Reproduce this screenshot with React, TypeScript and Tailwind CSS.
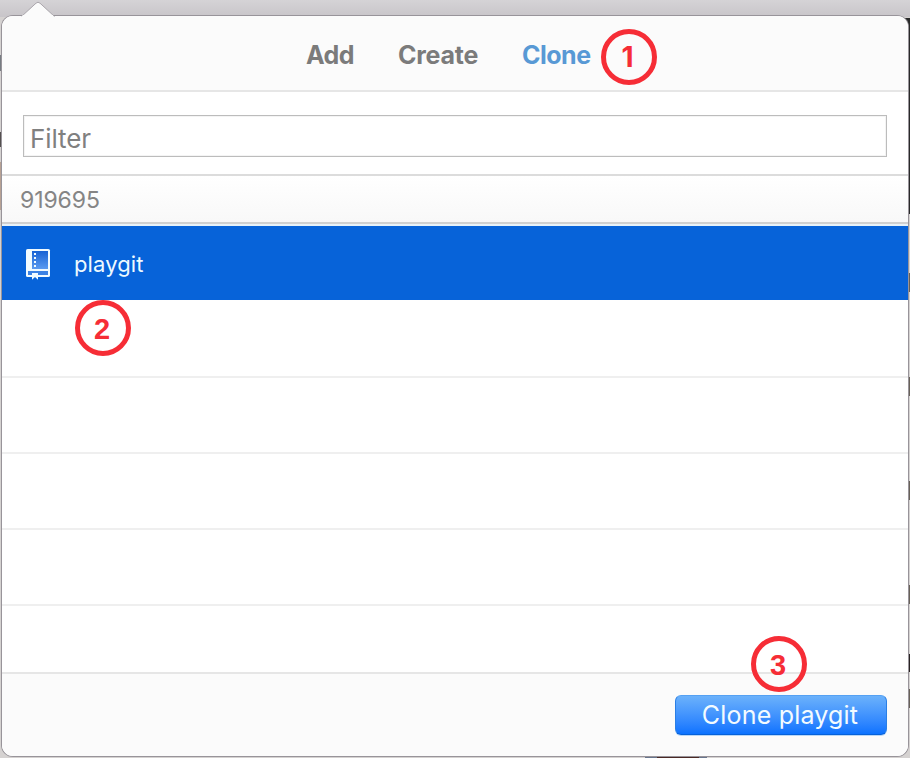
import type { ReactNode } from 'react';

function Marker({ children, className }: { children: ReactNode; className: string }) {
  return (
    <div
      className={`absolute z-10 flex h-14 w-14 items-center justify-center rounded-full border-[5px] border-[#f62d36] pr-0.5 font-bold leading-none text-[#f62d36] ${className}`}
    >
      {children}
    </div>
  );
}

function RepoIcon() {
  return (
    <svg width="26" height="32" viewBox="0 0 26 32" className="relative top-px shrink-0">
      <defs>
        <linearGradient id="page" x1="0" y1="0" x2="0" y2="1">
          <stop offset="0" stopColor="#1763d4" />
          <stop offset="1" stopColor="#5b9bf0" />
        </linearGradient>
      </defs>
      <rect x="0" y="0" width="24" height="28" rx="1.6" fill="#f1fbff" />
      <rect x="6" y="2" width="16" height="18" fill="url(#page)" />
      <path d="M2 22H22V26H12V24H6V26H2Z" fill="#3b82e4" />
      <path d="M8 4h2v2H8zM8 8h2v2H8zM8 12h2v2H8zM8 16h2v2H8z" fill="#f1fbff" />
      <path d="M6 24H12V30.7L9 28L6 30.7Z" fill="#f1fbff" />
    </svg>
  );
}

function Tab({ label, className }: { label: string; className: string }) {
  return <button className={`whitespace-nowrap text-left ${className}`}>{label}</button>;
}

export default function App() {
  return (
    <div className="relative h-[758px] w-[910px] overflow-hidden bg-[#d5d2d1] px-0.5 pt-4 font-['Inter',sans-serif]">
      {/* window behind the popover */}
      <div className="absolute inset-x-0 top-0 h-[17px] bg-gradient-to-b from-[#d5d3d6] to-[#c8c5c9]" />
      <div className="absolute left-0 top-[55px] h-4 w-0.5 bg-[#777c82]" />
      <div className="absolute left-0 top-[132px] h-[15px] w-0.5 bg-[#54504f]" />
      <div className="absolute left-0 top-[162px] h-12 w-0.5 bg-[#b7a193]" />
      <div className="absolute right-0 top-[18px] h-[196px] w-5 bg-[#292929]" />
      <div className="absolute right-0 top-[273px] h-[19px] w-0.5 bg-[#686159]" />
      <div className="absolute right-0 top-[377px] h-[19px] w-0.5 bg-[#686159]" />
      <div className="absolute right-0 top-[481px] h-[19px] w-0.5 bg-[#686159]" />
      <div className="absolute right-0 top-[585px] h-[19px] w-0.5 bg-[#686159]" />
      <div className="absolute right-0 top-[654px] h-[18px] w-0.5 bg-[#292323]" />
      <div className="absolute right-0 top-[689px] h-[19px] w-0.5 bg-[#686159]" />
      <div className="absolute bottom-0 left-[645px] h-0.5 w-[62px] bg-[#68758c]" />
      <div className="absolute bottom-0 left-[657px] h-0.5 w-[42px] bg-[#4a2925]" />

      <div className="relative flex h-[740px] w-[906px] flex-col overflow-hidden rounded-[11px] bg-white shadow-[0_0_0_1px_#98949a]">
        <nav className="flex h-[76px] shrink-0 items-center border-b-2 border-[#e6e6e6] bg-[#fbfbfb] pl-[304px] pt-[5.5px] text-[25px] font-bold text-[#7b7b7b]">
          <Tab label="Add" className="w-[92px] tracking-[-0.5px]" />
          <Tab label="Create" className="w-[124px] tracking-[-0.25px]" />
          <Tab label="Clone" className="tracking-[-0.5px] text-[#5899d5]" />
        </nav>
        <div className="h-[84px] shrink-0 border-b-2 border-[#dcdcdc] px-[21px] pt-[23px]">
          <input
            placeholder="Filter"
            className="block h-[42px] w-[864px] border border-[#bcbcbc] bg-white px-1.5 pt-[5px] text-[26px] leading-9 tracking-[-0.1px] shadow-[inset_0_0_0_1px_#f4f4f4] placeholder:text-[#808080] placeholder:opacity-100"
          />
        </div>
        <div className="flex h-[50px] shrink-0 items-center border-b-2 border-[#e8f2f8] bg-gradient-to-b from-white to-[#f8f8f8] pt-px shadow-[inset_0_-2px_0_#d0d0d0]">
          <span className="pl-[18px] text-[23px] tracking-[-0.1px] text-[#858585]">919695</span>
        </div>
        <div className="flex h-[74px] shrink-0 items-center bg-[#0763d9] pl-6 pt-0.5 text-[#eefaff]">
          <RepoIcon />
          <span className="pl-[22px] text-[22px] tracking-[0.1px]">playgit</span>
        </div>
        <div className="h-[78px] shrink-0 border-b-2 border-[#efefef]" />
        <div className="h-[76px] shrink-0 border-b-2 border-[#efefef]" />
        <div className="h-[76px] shrink-0 border-b-2 border-[#efefef]" />
        <div className="h-[76px] shrink-0 border-b-2 border-[#efefef]" />
        <div className="h-[66px] shrink-0" />
        <footer className="flex flex-1 justify-end border-t-2 border-[#e6e6e6] bg-[#fbfbfb] pr-[21px] pt-[21px]">
          <button className="flex h-10 w-[212px] items-center justify-center rounded-md border border-b-[#0661d9] border-l-[#2a7fe5] border-r-[#2a7fe5] border-t-[#55a1f3] bg-gradient-to-b from-[#6bb1fb] to-[#0a72ff] pr-0.5 pt-0.5 text-[25px] tracking-[0.2px] text-[#f3fbff] shadow-[0_1px_0_#b9d7f7]">
            Clone playgit
          </button>
        </footer>
      </div>

      <svg className="absolute left-[20px] top-0" width="36" height="17" viewBox="0 0 36 17">
        <path d="M1.5 16.5L16 3.2Q18 1.2 20 3.2L34.5 16.5" fill="#fbfbfb" stroke="#aaa6ac" strokeWidth="1" />
        <path d="M3 15H33V17H1Z" fill="#fbfbfb" />
      </svg>

      <Marker className="left-[601px] top-[29px] pr-[3px] font-['Inter',sans-serif] text-[28px]">1</Marker>
      <Marker className="left-[75px] top-[300px] pt-[3px] font-['Liberation_Sans',sans-serif] text-[29px]">2</Marker>
      <Marker className="left-[751px] top-[636px] pt-[3px] font-['Liberation_Sans',sans-serif] text-[29px]">3</Marker>
    </div>
  );
}
